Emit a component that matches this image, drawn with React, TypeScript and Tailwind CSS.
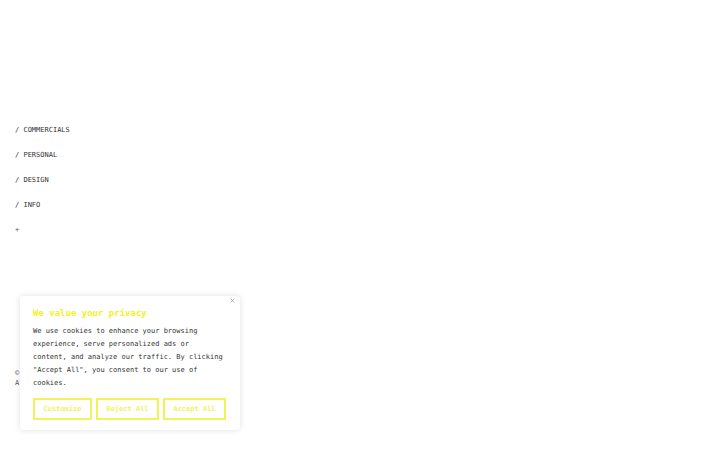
import { X } from 'lucide-react';

const mono = { fontFamily: '"DejaVu Sans Mono", "Liberation Mono", monospace' };

const NAV = ['COMMERCIALS', 'PERSONAL', 'DESIGN', 'INFO'];

export default function App() {
  return (
    <div className="relative h-[450px] w-[720px] overflow-hidden bg-white text-[#222]" style={mono}>
      <nav className="flex flex-col gap-[16px] pl-[15px] pt-[126px] text-[7px] leading-[9px]">
        {NAV.map((item) => (
          <a key={item} href="#" className="text-[#333]">
            / {item}
          </a>
        ))}
        <span className="text-[#555]">+</span>
      </nav>

      <footer className="absolute left-[15px] top-[368px] text-[7px] leading-[10px] text-[#555]">
        <p>© 2024</p>
        <p>All rights reserved</p>
      </footer>

      <CookieBanner />
    </div>
  );
}

function CookieBanner() {
  return (
    <div className="absolute left-[20px] top-[296px] w-[220px] rounded-[3px] bg-white pb-[10px] pl-[13px] pr-[16px] pt-[11px] shadow-[0_0_6px_rgba(0,0,0,0.12)]">
      <button className="absolute right-[4px] top-[1px] text-[#888]">
        <X className="h-[7px] w-[7px]" strokeWidth={2} />
      </button>
      <h2 className="text-[9px] font-bold leading-[12px] text-[#f2f21a]">We value your privacy</h2>
      <p className="mt-[6px] text-[7px] leading-[13px] text-[#333]">
        We use cookies to enhance your browsing experience, serve personalized ads or content, and
        analyze our traffic. By clicking "Accept All", you consent to our use of cookies.
      </p>
      <div className="mt-[8px] flex gap-[4px]">
        {[
          ['Customize', 'w-[59px]'],
          ['Reject All', 'w-[63px]'],
          ['Accept All', 'w-[63px]'],
        ].map(([label, w]) => (
          <button
            key={label}
            className={`${w} h-[22px] shrink-0 border-2 border-[#f2f25a] text-[7px] font-bold text-[#f2f25a]`}
          >
            {label}
          </button>
        ))}
      </div>
    </div>
  );
}
